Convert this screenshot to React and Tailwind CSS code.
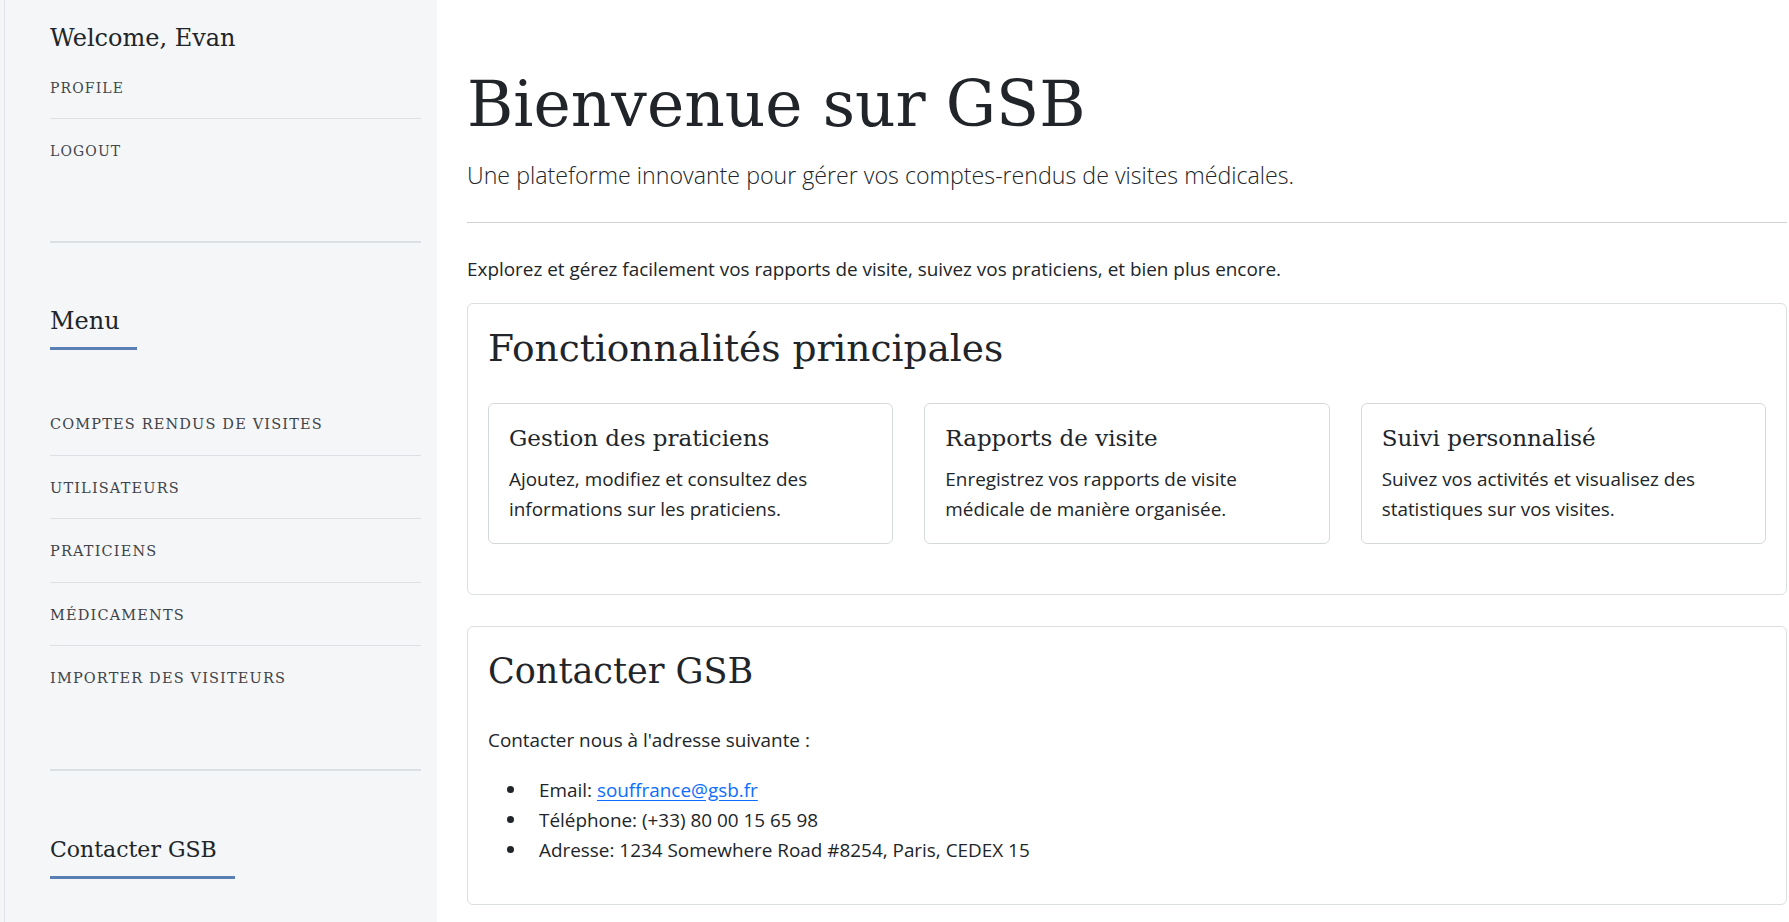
import React from "react";

const slab = "font-['DejaVu_Serif',serif]";
const sans = "font-['Open_Sans','Noto_Sans',sans-serif]";

const menuItems = [
  "COMPTES RENDUS DE VISITES",
  "UTILISATEURS",
  "PRATICIENS",
  "MÉDICAMENTS",
  "IMPORTER DES VISITEURS",
];

const features = [
  {
    title: "Gestion des praticiens",
    text: "Ajoutez, modifiez et consultez des informations sur les praticiens.",
  },
  {
    title: "Rapports de visite",
    text: "Enregistrez vos rapports de visite médicale de manière organisée.",
  },
  {
    title: "Suivi personnalisé",
    text: "Suivez vos activités et visualisez des statistiques sur vos visites.",
  },
];

const contact = [
  {
    label: "Email:",
    value: (
      <a href="#" className="text-[#0d6efd] underline underline-offset-[3px]">
        souffrance@gsb.fr
      </a>
    ),
  },
  { label: "Téléphone:", value: "(+33) 80 00 15 65 98" },
  { label: "Adresse:", value: "1234 Somewhere Road #8254, Paris, CEDEX 15" },
];

function Sidebar() {
  return (
    <aside className={`w-[437px] shrink-0 bg-[#f4f6f8] pl-[4px] ${slab}`}>
      <div className="h-full border-l border-[#e1e3e6] pl-[45px] pr-[16px]">
        <div className="pt-[26px] text-[24px] leading-none text-[#212529]">
          Welcome, Evan
        </div>
        <ul className="mt-[28px] text-[14px] tracking-[0.08em] text-[#43474d]">
          <li className="pb-[19px] border-b border-[#dcdfe3]">PROFILE</li>
          <li className="pt-[22px]">LOGOUT</li>
        </ul>
        <div className="mt-[79px] border-t-2 border-[#dcdfe3]" />

        <div className="mt-[66px]">
          <h3 className="text-[24px] leading-none text-[#212529]">Menu</h3>
          <div className="mt-[14px] h-[3px] w-[87px] bg-[#5a7fb4]" />
        </div>
        <ul className="mt-[42px] text-[14.5px] tracking-[0.08em] text-[#3f4349]">
          {menuItems.map((item, i) => (
            <li
              key={item}
              className={`h-[63.6px] pt-[22px] ${
                i < menuItems.length - 1 ? "border-b border-[#dcdfe3]" : ""
              }`}
            >
              {item}
            </li>
          ))}
        </ul>
        <div className="mt-[59px] border-t-2 border-[#dcdfe3]" />

        <div className="mt-[68px]">
          <h3 className="text-[22px] leading-none text-[#212529]">
            Contacter GSB
          </h3>
          <div className="mt-[15px] h-[3px] w-[185px] bg-[#5a7fb4]" />
        </div>
      </div>
    </aside>
  );
}

function Card({ children, className = "" }) {
  return (
    <div
      className={`rounded-[6px] border border-[#dcdfe2] bg-white px-[20px] ${className}`}
    >
      {children}
    </div>
  );
}

export default function App() {
  return (
    <div className={`flex h-[922px] overflow-hidden bg-white text-[#212529] ${sans}`}>
      <Sidebar />
      <main className="flex-1 pl-[30px] pr-[2px]">
        <h1 className={`${slab} mt-[73px] text-[63px] leading-none text-[#212529]`}>
          Bienvenue sur GSB
        </h1>
        <p className="mt-[24px] text-[23.2px] font-light leading-[30px] text-[#212529]">
          Une plateforme innovante pour gérer vos comptes-rendus de visites médicales.
        </p>
        <hr className="mt-[32px] border-t border-[#cfd2d5]" />
        <p className="mt-[31px] text-[18.9px] leading-[30px]">
          Explorez et gérez facilement vos rapports de visite, suivez vos praticiens, et bien plus encore.
        </p>

        <Card className="mt-[19px] pt-[26px] pb-[50px]">
          <h2 className={`${slab} text-[37.5px] leading-none`}>
            Fonctionnalités principales
          </h2>
          <div className="mt-[35px] grid grid-cols-3 gap-[31px]">
            {features.map((f) => (
              <div
                key={f.title}
                className="rounded-[6px] border border-[#d6d9dc] px-[20px] pt-[19px] pb-[19px]"
              >
                <h5 className={`${slab} text-[23px] leading-[30px]`}>{f.title}</h5>
                <p className="mt-[11px] pr-[28px] text-[18.9px] leading-[30px]">
                  {f.text}
                </p>
              </div>
            ))}
          </div>
        </Card>

        <Card className="mt-[31px] pt-[27px] pb-[39px]">
          <h2 className={`${slab} text-[35px] leading-none`}>Contacter GSB</h2>
          <p className="mt-[36px] text-[18.9px] leading-[30px]">
            Contacter nous à l'adresse suivante :
          </p>
          <ul className="mt-[20px] pl-[19px] text-[18.9px] leading-[30px]">
            {contact.map((c) => (
              <li key={c.label} className="flex items-center gap-[25px]">
                <span className="h-[7px] w-[7px] shrink-0 rounded-full bg-[#212529]" />
                <span>
                  {c.label} {c.value}
                </span>
              </li>
            ))}
          </ul>
        </Card>
      </main>
    </div>
  );
}
